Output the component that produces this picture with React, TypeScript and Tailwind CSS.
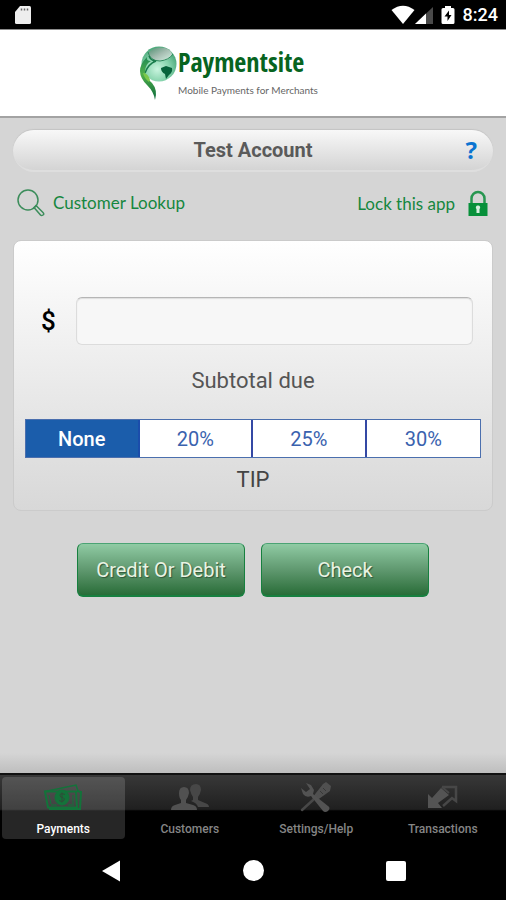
import { useState } from "react";

const tips = ["None", "20%", "25%", "30%"];

function StatusBar() {
  return (
    <div className="flex h-[30px] items-center justify-between border-b border-[#8c8c8c] bg-black pr-2 pl-[14px] text-white">
      <svg width="18" height="20" viewBox="0 0 18 20" aria-hidden="true">
        <path d="M6 1h9.500Q17 1 17 2.500v15q0 1.500-1.500 1.500h-13Q1 19 1 17.500V7z" fill="#eee" />
        <path d="M7.500 3.500v2M10.500 3.500v2M13.500 3.500v2" stroke="#666" strokeWidth="1.500" />
      </svg>
      <div className="flex items-center">
        <svg width="24" height="20" viewBox="0 0 24 20" aria-hidden="true">
          <path d="M0.500 5Q12-3.500 23.500 5L12 19z" fill="#fff" />
        </svg>
        <svg width="18" height="20" viewBox="0 0 18 20" aria-hidden="true">
          <path d="M18 2v17H0z" fill="#4a4a4a" />
          <path d="M11 8.500V19H0z" fill="#fff" />
        </svg>
        <svg className="ml-2" width="14" height="20" viewBox="0 0 14 20" aria-hidden="true">
          <path d="M4 1h6v2h2q1.500 0 1.500 1.500v13q0 1.500-1.500 1.500H2Q.5 19 .5 17.500v-13Q.5 3 2 3h2z" fill="#fff" />
          <path d="M8 5.500L3.500 11.500h3V16L10.500 10h-2.500z" fill="#000" />
        </svg>
        <span className="ml-2 text-lg leading-5 font-medium">8:24</span>
      </div>
    </div>
  );
}

function GlobeLogo() {
  return (
    <svg width="38" height="60" viewBox="0 0 38 60" aria-hidden="true">
      <defs>
        <radialGradient id="globe" cx="0.45" cy="0.65" r="0.6">
          <stop offset="0" stopColor="#c9f4df" />
          <stop offset="0.6" stopColor="#86d3ac" />
          <stop offset="1" stopColor="#4fab7d" />
        </radialGradient>
        <linearGradient id="shade" x1="0" y1="0" x2="1" y2="1">
          <stop offset="0" stopColor="#4f8f70" />
          <stop offset="0.5" stopColor="#a5bdb1" />
          <stop offset="1" stopColor="#d7f2e5" />
        </linearGradient>
        <linearGradient id="tail" x1="0" y1="0" x2="0" y2="1">
          <stop offset="0" stopColor="#1f8a55" />
          <stop offset="0.4" stopColor="#4fae4a" />
          <stop offset="1" stopColor="#0d6b3c" />
        </linearGradient>
      </defs>
      <circle cx="19" cy="20" r="17.500" fill="url(#globe)" />
      <path d="M8 9Q15 2 25 4q7 2 7 7-4 7-15 6-7-1-9-8z" fill="url(#shade)" />
      <path d="M8 8q2 9 12 9 9-1 13-7" fill="none" stroke="#2c8a5c" strokeWidth="1" />
      <path d="M21 24l5-2 6 2q1 4-3 7l-3 4-1-5q-4-2-4-6z" fill="#07633b" />
      <path d="M9 12q2 5 7 5-8 3-11 12" fill="none" stroke="#187a4b" strokeWidth="1.500" />
      <path d="M7 13Q0 20 0 27q0 7 7 14 7 7 8 15 3-10-3-17-7-6-7-11 0-8 6-11-5 0-4-4z" fill="url(#tail)" />
      <path d="M3 29q5 0 7 7l-1 2q-5-4-6-9z" fill="#7cc84a" />
    </svg>
  );
}

function Header() {
  return (
    <header className="flex h-[88px] justify-center border-b-2 border-[#a3a3a3] bg-white pt-[14px] pr-[42px]">
      <GlobeLogo />
      <div className="flex w-[146px] flex-col whitespace-nowrap">
        <span className="font-['Open_Sans_Condensed','Open_Sans',sans-serif] text-[26px] leading-9 font-bold text-[#07641f]">
          Paymentsite
        </span>
        <span className="font-[Lato,sans-serif] text-[10px] leading-5 text-[#666]">Mobile Payments for Merchants</span>
      </div>
    </header>
  );
}

function AccountBar() {
  return (
    <div className="grid h-[42px] grid-cols-[1fr_auto_1fr] items-center rounded-full border-b-2 border-[#dedede] bg-linear-to-b from-[#f8f8f8] to-[#d4d4d4] px-3 shadow-[0_-1px_1px_#c4c4c4]">
      <h1 className="col-start-2 text-xl font-bold text-[#5a5a5a]">Test Account</h1>
      <button type="button" aria-label="Help" className="justify-self-end px-1 font-['Noto_Sans',sans-serif] text-2xl font-bold text-[#0b74d1]">
        ?
      </button>
    </div>
  );
}

function Links() {
  return (
    <div className="flex justify-between px-1 pt-4 font-[Lato,sans-serif] text-[17px] text-[#16873f]">
      <a href="#lookup" className="flex h-[30px] items-center gap-2">
        <svg width="28" height="28" viewBox="0 0 28 28" fill="none" stroke="#3c8d5b" aria-hidden="true">
          <circle cx="11" cy="11" r="10" strokeWidth="1.500" />
          <path d="M17 18.500l2-2 7 7q1.500 1.500 0 2.500t-2.500 0z" strokeWidth="1.500" />
        </svg>
        Customer Lookup
      </a>
      <a href="#lock" className="flex h-8 items-center gap-3">
        Lock this app
        <svg width="22" height="28" viewBox="0 0 22 28" aria-hidden="true">
          <path d="M4.500 13V8.500a6.500 6.500 0 0 1 13 0V13" fill="none" stroke="#279650" strokeWidth="2.500" />
          <path d="M1.500 13h19v13h-19z" fill="#07903a" />
          <path d="M11 15.500a2 2 0 0 1 1.500 3.500v4h-3v-4a2 2 0 0 1 1.500-3.500z" fill="#d5f0df" />
        </svg>
      </a>
    </div>
  );
}

function PaymentCard() {
  const [tip, setTip] = useState("None");

  return (
    <section className="mt-5 rounded-lg border border-[#cbcbcb] bg-linear-to-b from-white to-[#d8d8d8] px-[11px] pt-14 pb-4">
      <div className="flex items-center pr-2 pl-4">
        <span className="w-[35px] text-[26px] font-medium text-black">$</span>
        <input
          id="subtotal"
          type="text"
          className="h-12 min-w-0 flex-1 rounded-md border border-[#dcdcdc] border-t-[#b5b5b5] bg-[#f7f7f7] px-3 text-2xl shadow-[inset_0_1px_1px_#ddd] outline-none"
        />
      </div>
      <label htmlFor="subtotal" className="mt-[22px] block text-center text-[22px] leading-7 text-[#555]">
        Subtotal due
      </label>
      <div role="group" aria-labelledby="tip-label" className="mt-6 grid h-[39px] grid-cols-4 border border-[#4b6fae] bg-white text-xl">
        {tips.map((t) => (
          <button
            key={t}
            type="button"
            aria-pressed={tip === t}
            onClick={() => setTip(t)}
            className="border-r-2 border-[#3448a4] text-[#3a62ae] last:border-r-0 aria-pressed:border-[#1b4dab] aria-pressed:bg-[#1b5dab] aria-pressed:font-medium aria-pressed:text-white"
          >
            {t}
          </button>
        ))}
      </div>
      <p id="tip-label" className="mt-2 text-center text-[22px] leading-7 text-[#444]">
        TIP
      </p>
    </section>
  );
}

function PayButton({ label }: { label: string }) {
  return (
    <button
      type="button"
      className="h-[54px] w-[168px] rounded-md border border-b-2 border-[#17803f] border-t-[#4ba374] bg-linear-to-b from-[#90cba4] via-[#609970] to-[#286d38] text-xl text-[#e9f3e3] [text-shadow:1px_1px_1px_#30563a]"
    >
      {label}
    </button>
  );
}

function MoneyIcon() {
  return (
    <svg width="40" height="28" viewBox="0 0 40 28" fill="none" stroke="#13733a" aria-hidden="true">
      <path d="M2 8.500L33 2l2 6" strokeWidth="1.500" />
      <path d="M2 8.500l3 16h29l-1-16z" strokeWidth="2" />
      <path d="M34 8l4 1-1 17H6" strokeWidth="2" />
      <path d="M6 12l2 9M30 12v9M8 22h6M25 22h6" strokeWidth="1" />
      <ellipse cx="19" cy="14.500" rx="7" ry="7.500" fill="#13733a" />
      <path d="M22 11.500q-5-2-5 1 0 2 3 2 2 1 1 3-2 2-5 0M19 9.500v10" stroke="#304b38" />
    </svg>
  );
}

function PeopleIcon() {
  return (
    <svg width="40" height="28" viewBox="0 0 40 28" aria-hidden="true">
      <path d="M26 1q5 0 5 6-1 5-3 7v3l7 3q4 1 4 4H28q-1-4-7-6l2-1v-3q-2-3-3-7 0-6 6-6z" fill="#474747" />
      <path d="M14 4q5 0 5 6-1 5-3 7v3l7 2q4 1 4 5H1q0-4 4-5l6-2v-3q-2-2-2-7 0-6 5-6z" fill="#515151" />
    </svg>
  );
}

function ToolsIcon() {
  return (
    <svg width="32" height="30" viewBox="0 0 32 30" aria-hidden="true">
      <path d="M2 28L13 18" stroke="#484848" strokeWidth="2.500" strokeLinecap="round" />
      <path d="M12 16l11-14 3-2 5 4-1 5-14 10z" fill="#505050" />
      <path d="M20 9l3 3M23 6l3 3" stroke="#383838" />
      <path d="M6 1l5 2 3 5-1 4 15 12q3 2 0 5-3 2-5 0L11 14q-5 2-8-2L1 6l5 4 4-3z" fill="#535353" />
    </svg>
  );
}

function TransferIcon() {
  return (
    <svg width="32" height="26" viewBox="0 0 32 26" aria-hidden="true">
      <path d="M15 3h14v14l-4-3-9 8" fill="none" stroke="#474747" strokeWidth="2.500" />
      <path d="M15 3l7 6" stroke="#474747" strokeWidth="2" />
      <path d="M1 10l4 4L14 4l8 7-11 8 4 5H1z" fill="#545454" />
    </svg>
  );
}

const tabs = [
  { label: "Payments", icon: <MoneyIcon /> },
  { label: "Customers", icon: <PeopleIcon /> },
  { label: "Settings/Help", icon: <ToolsIcon /> },
  { label: "Transactions", icon: <TransferIcon /> },
];

function TabBar() {
  return (
    <nav className="grid grid-cols-4 gap-1 border-t-2 border-[#111] bg-linear-to-b from-[#383838] from-0% via-[#202020] via-52% to-black to-56% px-[2px] py-[2px]">
      {tabs.map((tab, i) => (
        <button
          key={tab.label}
          type="button"
          aria-current={i === 0 ? "page" : undefined}
          className="flex h-[62px] flex-col items-center rounded-sm pt-1 text-xs font-medium text-[#858585] aria-[current]:bg-white/15 aria-[current]:text-white"
        >
          <span className="flex h-8 items-center">{tab.icon}</span>
          <span className="mt-2 leading-4">{tab.label}</span>
        </button>
      ))}
    </nav>
  );
}

function SystemNav() {
  return (
    <div className="flex h-[59px] items-center justify-center gap-[122px] bg-black">
      <button type="button" aria-label="Back">
        <svg width="20" height="22" viewBox="0 0 20 22" fill="#fff">
          <path d="M19 0.500v21L1 11z" />
        </svg>
      </button>
      <button type="button" aria-label="Home" className="size-[21px] rounded-full bg-white" />
      <button type="button" aria-label="Recent apps" className="size-5 rounded-xs bg-white" />
    </div>
  );
}

export default function App() {
  return (
    <div className="flex min-h-screen flex-col bg-[#d5d5d5] font-[Roboto,sans-serif]">
      <StatusBar />
      <Header />
      <main className="flex flex-1 flex-col px-[13px] pt-3">
        <AccountBar />
        <Links />
        <PaymentCard />
        <div className="mt-8 flex justify-center gap-4">
          <PayButton label="Credit Or Debit" />
          <PayButton label="Check" />
        </div>
      </main>
      <div className="h-5 bg-linear-to-b from-[#d5d5d5] to-[#bebebe]" />
      <TabBar />
      <SystemNav />
    </div>
  );
}
